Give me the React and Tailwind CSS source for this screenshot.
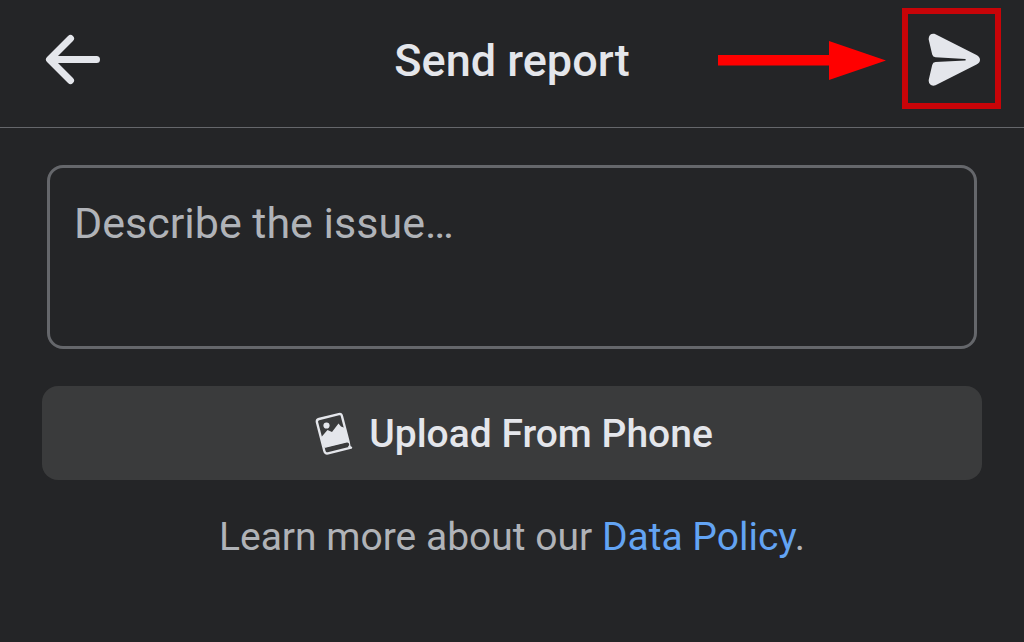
function BackIcon() {
  return (
    <svg width="56" height="52" viewBox="0 0 56 52" fill="none" stroke="#e4e6eb" strokeWidth="7" strokeLinecap="round" strokeLinejoin="round" aria-hidden="true">
      <path d="M25.5 5.5 L4.5 26.5 L25.5 47.5 M5 26.5 H51.5" />
    </svg>
  );
}

function PointerArrow() {
  return (
    <svg width="168" height="42" viewBox="0 -2 168 42" fill="#ff0000" className="shrink-0" aria-hidden="true">
      <path d="M0 15 H111 V1 L168 20.5 L111 40 V25.5 H0 Z" />
    </svg>
  );
}

function SendIcon() {
  return (
    <svg width="52" height="54" viewBox="0 0 52 54" fill="#e4e6eb" aria-hidden="true">
      <path d="M7.5 1.2 L48.5 22 Q52 23.9 52 26.8 Q52 29.700 48.5 31.600 L7.500 52.200 C3.500 53.800 0 51 0.800 46.500 L4.200 32 Q4.900 29.300 7.500 29.100 L37.200 27.500 Q38.400 26.700 37.200 25.900 L7.500 24.300 Q4.900 24.100 4.200 21.500 L0.800 7 C0 2.400 3.500 -0.400 7.500 1.200 Z" />
    </svg>
  );
}

function AlbumIcon() {
  return (
    <svg width="38" height="44" viewBox="0 0 38 44" fill="none" aria-hidden="true">
      <path d="M33.500 29.500 L26.900 4 Q26.300 1.500 23.800 2.100 L4 7 Q1.300 7.700 2 10.500 L9.300 38.800 Q10 42 13 41.300 L36 35.600 M33.500 29.500 L34.500 35" stroke="#e4e6eb" strokeWidth="2.400" strokeLinecap="round" strokeLinejoin="round" />
      <path d="M6 25.500 L12.500 18 L17 20 L23.500 11.500 L26 14.500 L30 16 L34 30 L9.500 36 Z" fill="#e4e6eb" />
      <circle cx="11.500" cy="13.500" r="3.100" fill="#e4e6eb" />
      <path d="M12.300 37.600 L32.500 32.600" stroke="#3a3b3c" strokeWidth="3.400" strokeLinecap="round" />
    </svg>
  );
}

export default function App() {
  return (
    <div className="min-h-screen bg-[#242527] font-['Roboto',sans-serif] text-[#e4e6eb]">
      <header className="grid grid-cols-[1fr_auto_1fr] items-center border-b border-[#65676b] pt-2 pb-[18px]">
        <div className="flex pl-[45px]">
          <button type="button" aria-label="Back">
            <BackIcon />
          </button>
        </div>
        <h1 className="pt-1 text-[45px] leading-[52px] font-medium">Send report</h1>
        <div className="flex items-center justify-end gap-4 pr-[23px]">
          <PointerArrow />
          <button type="button" aria-label="Send" className="flex h-[101px] w-[99px] shrink-0 items-center justify-center border-6 border-[#c80408] pt-0.5 pl-1">
            <SendIcon />
          </button>
        </div>
      </header>
      <main className="px-[42px] pt-[37px]">
        <div className="flex px-[5px]">
          <textarea
            aria-label="Describe the issue"
            placeholder="Describe the issue…"
            className="h-[184px] w-full resize-none rounded-2xl border-3 border-[#65676b] bg-transparent px-6 py-[29px] text-[43px] leading-[52px] outline-none placeholder:text-[#b0b3b8]"
          />
        </div>
        <button type="button" className="mt-[37px] flex h-[94px] w-full items-center justify-center gap-4 rounded-2xl bg-[#3a3b3c] pt-0.5 pl-1 text-[39px] font-medium">
          <AlbumIcon />
          Upload From Phone
        </button>
        <p className="mt-[31px] text-center text-[39px] leading-[52px] text-[#b0b3b8]">
          Learn more about our <a href="#data-policy" className="text-[#63a4f3]">Data Policy</a>.
        </p>
      </main>
    </div>
  );
}
